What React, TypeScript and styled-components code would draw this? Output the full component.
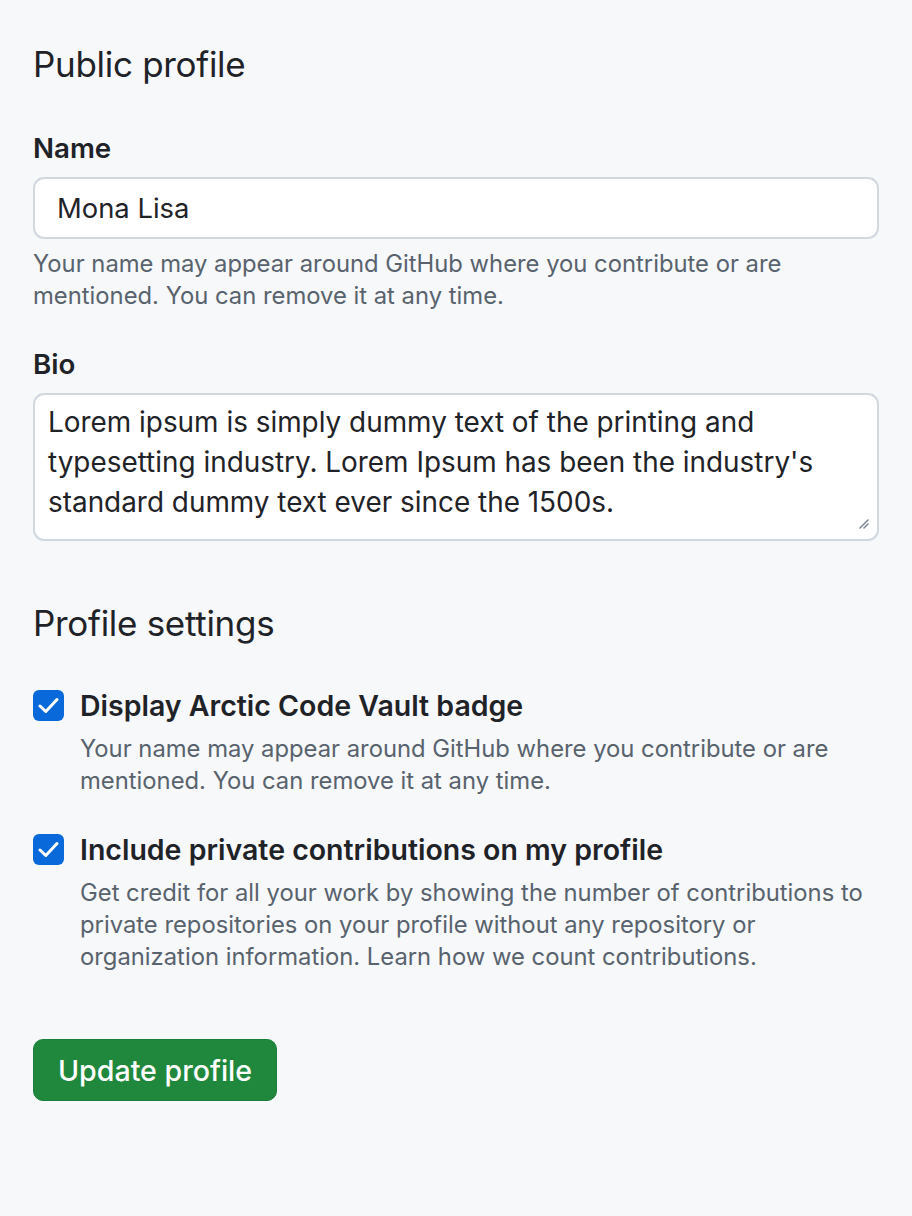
import React from "react"
import styled, { createGlobalStyle } from "styled-components"

const GlobalStyle = createGlobalStyle`
    html, body {
        margin : 0;
        background-color : #f6f8fa;
    }
    body {
        font-family : Inter, "Noto Sans", "Liberation Sans", sans-serif;
        color : #1f2328;
    }
`

const Page = styled.div`
    padding : 40px 33px 60px 33px;
    display : flex;
    flex-direction : column;
`

const Heading = styled.h2<{ $top?: number }>`
    margin : ${p => p.$top ?? 0}px 0 0 0;
    font-size : 35px;
    font-weight : 400;
    line-height : 48px;
    letter-spacing : -0.3px;
`

const Field = styled.div<{ $top: number }>`
    margin-top : ${p => p.$top}px;
    display : flex;
    flex-direction : column;
`

const Label = styled.label`
    font-size : 27.7px;
    font-weight : 600;
    line-height : 34px;
    margin-bottom : 12px;
`

const TextInput = styled.div`
    box-sizing : border-box;
    height : 62px;
    background-color : white;
    border : solid 2px #d1d9e0;
    border-radius : 11px;
    display : flex;
    align-items : center;
    padding : 0 22px;
    font-size : 27.4px;
`

const TextArea = styled.div`
    position : relative;
    box-sizing : border-box;
    height : 148px;
    background-color : white;
    border : solid 2px #d1d9e0;
    border-radius : 11px;
    padding : 7px 13px;
    font-size : 27.9px;
    line-height : 40px;
`

const Grip = styled.svg`
    position : absolute;
    right : 8px;
    bottom : 10px;
`

const Hint = styled.p`
    margin : 9px 0 0 0;
    font-size : 23.8px;
    line-height : 32px;
    color : #59636e;
`

const CheckRow = styled.div<{ $top: number }>`
    margin-top : ${p => p.$top}px;
    display : flex;
    align-items : flex-start;
    gap : 16px;
`

const Box = styled.div`
    width : 31px;
    height : 31px;
    flex-shrink : 0;
    margin-top : 1px;
    border-radius : 6px;
    background-color : #0969da;
    display : flex;
    align-items : center;
    justify-content : center;
`

const CheckText = styled.div`
    display : flex;
    flex-direction : column;
`

const CheckLabel = styled.div`
    font-size : 28.5px;
    font-weight : 600;
    line-height : 34px;
`

const CheckHint = styled(Hint)`
    margin-top : 10px;
`

const Button = styled.button`
    margin-top : 66px;
    align-self : flex-start;
    box-sizing : border-box;
    height : 62px;
    width : 244px;
    padding : 0;
    background-color : #1f883d;
    color : white;
    border : solid 1px #1a7f37;
    border-radius : 10px;
    font-family : inherit;
    font-size : 28.6px;
    font-weight : 500;
`

function Check(){
    return (
        <Box>
            <svg width="21" height="17" viewBox="0 0 21 17">
                <path d="M2 9 L7.8 14.5 L19 2.5" fill="none" stroke="white" strokeWidth="3" strokeLinecap="round" strokeLinejoin="round"/>
            </svg>
        </Box>
    )
}

export default function App(){
    return (
        <Page>
            <GlobalStyle/>
            <Heading>Public profile</Heading>
            <Field $top={43}>
                <Label>Name</Label>
                <TextInput>Mona Lisa</TextInput>
                <Hint>Your name may appear around GitHub where you contribute or are mentioned. You can remove it at any time.</Hint>
            </Field>
            <Field $top={35}>
                <Label>Bio</Label>
                <TextArea>
                    Lorem ipsum is simply dummy text of the printing and typesetting industry. Lorem Ipsum has been the industry's standard dummy text ever since the 1500s.
                    <Grip width="12" height="12" viewBox="0 0 12 12">
                        <path d="M11 3 L3 11 M11 7 L7 11" stroke="#818b98" strokeWidth="1.6" strokeLinecap="round"/>
                    </Grip>
                </TextArea>
            </Field>
            <Heading $top={58}>Profile settings</Heading>
            <CheckRow $top={42}>
                <Check/>
                <CheckText>
                    <CheckLabel>Display Arctic Code Vault badge</CheckLabel>
                    <CheckHint>Your name may appear around GitHub where you contribute or are mentioned. You can remove it at any time.</CheckHint>
                </CheckText>
            </CheckRow>
            <CheckRow $top={36}>
                <Check/>
                <CheckText>
                    <CheckLabel>Include private contributions on my profile</CheckLabel>
                    <CheckHint>Get credit for all your work by showing the number of contributions to private repositories on your profile without any repository or organization information. Learn how we count contributions.</CheckHint>
                </CheckText>
            </CheckRow>
            <Button>Update profile</Button>
        </Page>
    )
}
